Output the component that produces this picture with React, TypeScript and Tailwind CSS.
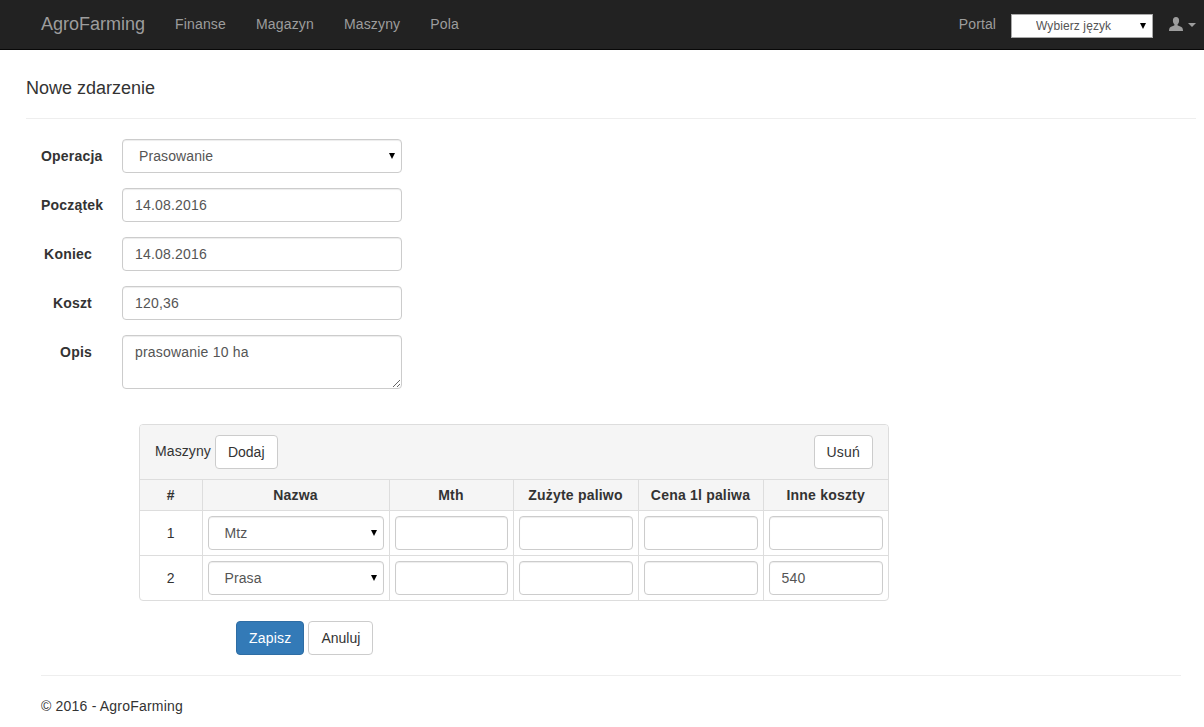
import React from "react";

const inputCls =
  "block h-[34px] w-full rounded-[4px] border border-[#ccc] bg-white px-3 text-[14px] text-[#555] shadow-[inset_0_1px_1px_rgba(0,0,0,0.075)] outline-none";

function Sel({ value, cls }: { value: string; cls: string }) {
  return (
    <div className={"relative " + cls}>
      <select
        defaultValue={value}
        className="block h-[34px] w-full appearance-none rounded-[4px] border border-[#ccc] bg-white pl-[16px] pr-6 text-[14px] tracking-[0.1px] text-[#555] shadow-[inset_0_1px_1px_rgba(0,0,0,0.075)] outline-none"
      >
        <option>{value}</option>
      </select>
      <span className="pointer-events-none absolute right-[7px] top-[14px] h-0 w-0 border-x-[3.5px] border-t-[6px] border-x-transparent border-t-black" />
    </div>
  );
}

function Row({ label, children }: { label: string; children: React.ReactNode }) {
  return (
    <div className="flex items-start">
      <label className="block h-[34px] w-[51px] whitespace-nowrap text-right text-[14px] font-bold leading-[34px] text-[#333]">
        {label}
      </label>
      <div className="ml-[30px] w-[280px]">{children}</div>
    </div>
  );
}

function Field({ value }: { value: string }) {
  return <input readOnly value={value} className={inputCls} />;
}

const headers = ["#", "Nazwa", "Mth", "Zużyte paliwo", "Cena 1l paliwa", "Inne koszty"];
const rows = [
  { n: "1", name: "Mtz", other: "" },
  { n: "2", name: "Prasa", other: "540" },
];

export default function App() {
  return (
    <div className="min-h-[727px] bg-white text-[14px] leading-[20px] tracking-[0.2px] text-[#333] [font-family:'Liberation_Sans',Arial,sans-serif]">
      <nav className="flex h-[50px] items-center justify-between border-b border-[#080808] bg-[#222]">
        <div className="flex items-center pb-[2px] pl-[26px] tracking-[0.16px] text-[#9d9d9d]">
          <a className="px-[15px] text-[18px] tracking-normal">AgroFarming</a>
          <a className="px-[15px]">Finanse</a>
          <a className="px-[15px]">Magazyn</a>
          <a className="px-[15px]">Maszyny</a>
          <a className="px-[15px]">Pola</a>
        </div>
        <div className="flex items-center pb-[2px] tracking-[0.1px] text-[#9d9d9d]">
          <a>Portal</a>
          <div className="relative ml-[15px] mt-[5px] w-[142px]">
            <select
              defaultValue="Wybierz język"
              className="block h-[24px] w-full appearance-none rounded-none border border-[#a9a9a9] bg-white pl-[24px] text-[12px] tracking-[0.1px] text-[#555] outline-none"
            >
              <option>Wybierz język</option>
            </select>
            <span className="pointer-events-none absolute right-[7px] top-[9px] h-0 w-0 border-x-[3.5px] border-t-[6px] border-x-transparent border-t-black" />
          </div>
          <svg className="ml-[16px]" width="14" height="14" viewBox="0 0 14 14" aria-hidden="true">
            <path
              fill="#9d9d9d"
              d="M7 0C4.900 0 3.900 1.500 3.900 3.400c0 1.500.5 3 1.400 3.900.3.4.3 1-.1 1.300-.4.3-3.200 1-4.200 1.900C.4 11.100 0 12.500 0 14h14c0-1.500-.4-2.900-1-3.500-1-.9-3.800-1.600-4.200-1.900-.4-.3-.4-.9-.1-1.300.9-.9 1.400-2.400 1.400-3.900C10.100 1.500 9.100 0 7 0z"
            />
          </svg>
          <span className="ml-[5px] mr-[8px] mt-[3px] h-0 w-0 border-x-[4px] border-t-[4px] border-x-transparent border-t-[#9d9d9d]" />
        </div>
      </nav>

      <main className="pl-[26px] pr-[8px]">
        <h2 className="pt-[28px] text-[18px] font-normal leading-[20px] tracking-normal">Nowe zdarzenie</h2>
        <hr className="mt-[20px] border-t border-[#eee]" />

        <div className="ml-[15px] mt-[20px] flex flex-col gap-[15px]">
          <Row label="Operacja">
            <Sel value="Prasowanie" cls="w-full" />
          </Row>
          <Row label="Początek">
            <Field value="14.08.2016" />
          </Row>
          <Row label="Koniec">
            <Field value="14.08.2016" />
          </Row>
          <Row label="Koszt">
            <Field value="120,36" />
          </Row>
          <Row label="Opis">
            <textarea
              readOnly
              value="prasowanie 10 ha"
              className="block h-[54px] w-full rounded-[4px] border border-[#ccc] bg-white px-3 py-[6px] text-[14px] leading-[20px] text-[#555] shadow-[inset_0_1px_1px_rgba(0,0,0,0.075)] outline-none"
            />
          </Row>
        </div>

        <section className="ml-[113px] mt-[35px] w-[750px] overflow-hidden rounded-[4px] border border-[#ddd] bg-white">
          <div className="flex h-[55px] items-center justify-between border-b border-[#ddd] bg-[#f5f5f5] px-[15px]">
            <div className="flex items-center gap-[4px]">
              <span className="pb-[2px] tracking-[0.1px]">Maszyny</span>
              <button className="h-[34px] rounded-[4px] border border-[#ccc] bg-white px-3 text-[14px] tracking-normal text-[#333]">Dodaj</button>
            </div>
            <button className="h-[34px] rounded-[4px] border border-[#ccc] bg-white px-3 text-[14px] text-[#333]">Usuń</button>
          </div>
          <table className="w-full table-fixed border-collapse">
            <colgroup>
              <col className="w-[62px]" />
              <col className="w-[187px]" />
              <col className="w-[124px]" />
              <col className="w-[125px]" />
              <col className="w-[125px]" />
              <col />
            </colgroup>
            <thead>
              <tr className="h-[30px] border-b border-[#ddd] bg-[#f5f5f5]">
                {headers.map((h, i) => (
                  <th key={h} className={"p-0 text-center text-[14px] font-bold " + (i > 0 ? "border-l border-[#ddd]" : "")}>
                    {h}
                  </th>
                ))}
              </tr>
            </thead>
            <tbody>
              {rows.map((r, ri) => (
                <tr key={r.n} className={"h-[45px] " + (ri === 0 ? "border-b border-[#ddd]" : "")}>
                  <td className="p-0 text-center">{r.n}</td>
                  <td className="border-l border-[#ddd] px-[5px] py-0">
                    <Sel value={r.name} cls="w-full" />
                  </td>
                  {[0, 1, 2].map((c) => (
                    <td key={c} className="border-l border-[#ddd] px-[5px] py-0">
                      <input readOnly value="" className={inputCls} />
                    </td>
                  ))}
                  <td className="border-l border-[#ddd] px-[5px] py-0">
                    <input readOnly value={r.other} className={inputCls} />
                  </td>
                </tr>
              ))}
            </tbody>
          </table>
        </section>

        <div className="ml-[210px] mt-[20px] flex gap-[4px]">
          <button className="h-[34px] rounded-[4px] border border-[#2e6da4] bg-[#337ab7] px-3 text-[14px] text-white">Zapisz</button>
          <button className="h-[34px] rounded-[4px] border border-[#ccc] bg-white px-3 text-[14px] tracking-normal text-[#333]">Anuluj</button>
        </div>

        <hr className="ml-[15px] mr-[15px] mt-[20px] border-t border-[#eee]" />
        <footer className="ml-[15px] mt-[20px]">© 2016 - AgroFarming</footer>
      </main>
    </div>
  );
}
